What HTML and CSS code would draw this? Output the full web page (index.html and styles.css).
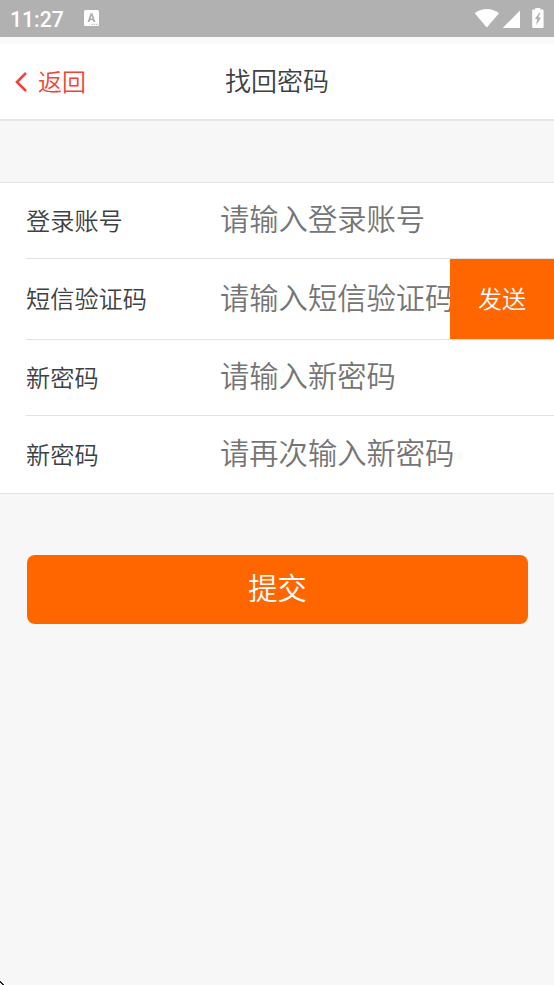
FILE: index.html
```html
<!DOCTYPE html>
<html lang="zh-CN">
<head>
<meta charset="utf-8">
<title>找回密码</title>
<link rel="stylesheet" href="styles.css">
</head>
<body>
<div class="status">
  <span class="time">11:27</span>
  <svg class="app" width="15" height="16" viewBox="0 0 15 16"><path fill="#fff" fill-rule="evenodd" d="M1.500 0h12Q15 0 15 1.500v13Q15 16 13.500 16h-12Q0 16 0 14.500v-13Q0 0 1.500 0ZM6.500 3.300 3.500 12h2l.6-1.800h2.800l.6 1.800h2L8.500 3.300ZM7.500 5.800l.9 2.600H6.600ZM7.500 13.700v1H9v-1Zm2.300 0v1h1.400v-1Zm2.200 0v1h1.500v-1Z"/></svg>
  <svg class="signals" width="80" height="37" viewBox="474 0 80 37">
    <path fill="#fff" d="M474.700 13.200Q486.700 4.800 499 13.200L486.800 27.600Z"/>
    <path fill="#fff" d="M520 10.500V28H502.700Z"/>
    <path fill="#fff" fill-rule="evenodd" d="M533 9.500h2.300V8h5v1.500h2.300q1 0 1 1V27q0 1-1 1H533.200q-1 0-1-1V10.500q0-1 .8-1ZM539.300 12.800l-4.500 6.200h2.400l-1 6.200 4.800-7.700h-2.600l2-4.700Z"/>
  </svg>
</div>
<header class="nav">
  <a class="back"><svg width="12" height="20" viewBox="0 0 12 20"><path d="M11 1 2 10l9 9" fill="none" stroke="#f44336" stroke-width="2.600"/></svg><span>返回</span></a>
  <h1 class="title">找回密码</h1>
</header>
<main>
  <div class="group">
    <div class="row"><label>登录账号</label><div class="field">请输入登录账号</div></div>
    <div class="row code"><label>短信验证码</label><div class="field">请输入短信验证码</div><button class="send">发送</button></div>
    <div class="row"><label>新密码</label><div class="field">请输入新密码</div></div>
    <div class="row last"><label>新密码</label><div class="field">请再次输入新密码</div></div>
  </div>
  <button class="submit">提交</button>
</main>
<svg class="corner" width="4" height="4" viewBox="0 0 4 4"><path d="M0 0v2h1v1h1v1h2V3H3V2H2V1H1V0Z" fill="#222"/></svg>
</body>
</html>
```
FILE: styles.css
```css
* { box-sizing: border-box; }
body {
  margin: 0;
  height: 985px;
  overflow: hidden;
  position: relative;
  background: #f7f7f7;
  color: #3d4145;
  font-family: "Noto Sans CJK SC", sans-serif;
  font-weight: 350;
}
.status {
  height: 37px;
  background: #b1b1b1;
  display: flex;
  align-items: center;
  padding-left: 10px;
  color: #fff;
}
.time { font: 500 21.200px/37px Roboto, sans-serif; width: 74px; padding-top: 2px; }
.signals { margin-left: auto; }
.app { margin-top: -1px; }
.nav {
  height: 84px;
  border-top: 7px solid #fafafa;
  border-bottom: 2px solid #e7e7e7;
  background: #fff;
  display: grid;
  grid-template-columns: 1fr auto 1fr;
  align-items: center;
}
.back { display: flex; align-items: center; gap: 11px; padding-left: 15px; color: #f44336; font-size: 24px; line-height: 36px; }
.back svg { margin-top: 1px; }
.back span { margin-top: -1px; }
.title { margin: 0; font-size: 26px; font-weight: inherit; line-height: 38px; padding-bottom: 3px; }
.group {
  margin-top: 61px;
  border-top: 1px solid #e2e2e2;
  border-bottom: 1px solid #e2e2e2;
  background: #fff;
}
.row {
  margin-left: 26px;
  height: 76px;
  border-bottom: 1px solid #e2e2e2;
  display: flex;
  align-items: center;
}
.row.code { height: 81px; }
.row.last { height: 77px; border-bottom: 0; }
.row label { width: 194px; flex: none; font-size: 24.200px; line-height: 36px; padding-bottom: 2px; }
.field { flex: 1; min-width: 0; white-space: nowrap; color: #757575; font-size: 29.300px; line-height: 44px; padding-bottom: 7px; }
button { border: 0; padding: 0; background: #f60; color: #fff; font-family: inherit; font-weight: inherit; }
.send { position: relative; width: 104px; height: 100%; flex: none; font-size: 24px; padding-bottom: 4px; }
.submit { display: block; width: 501px; height: 69px; margin: 61px 0 0 27px; border-radius: 8px; font-size: 29.300px; padding-bottom: 8px; }
.corner { position: absolute; left: 0; bottom: 0; }
```
